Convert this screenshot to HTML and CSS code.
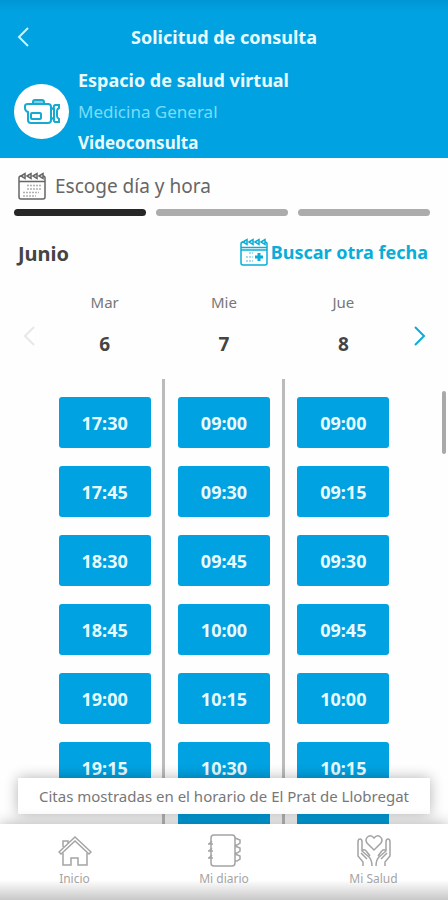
FILE: index.html
```html
<!DOCTYPE html>
<html lang="es">
<head>
  <meta charset="UTF-8">
  <meta name="viewport" content="width=device-width, initial-scale=1">
  <title>Solicitud de consulta</title>
  <link rel="stylesheet" href="styles.css">
</head>
<body>

<header class="header">
  <div class="topbar">
    <button class="back" aria-label="Volver">
      <svg width="12" height="20" viewBox="0 0 12 20"><path d="M11 1L2 10l9 9"/></svg>
    </button>
    <h1>Solicitud de consulta</h1>
  </div>
  <div class="service">
    <div class="avatar">
      <svg width="38" height="26" viewBox="0 0 38 26">
        <path class="handle" d="M10 5V3q0-2 2-2h7q2 0 2 2v2z"/>
        <path d="M5 5h20q3 0 3 3v13q0 3-3 3H8q-3 0-3-3v-8q-3-1-3-4V7q0-2 3-2z"/>
        <path d="M28 10q3 0 3-3l1-1h4v3q-2 1-2 3v5q0 2 2 3v3h-4l-1-1q0-3-3-3M31 9v12"/>
        <rect x="8" y="14" width="10" height="6" rx="1"/>
      </svg>
    </div>
    <div class="service-text">
      <div class="place">Espacio de salud virtual</div>
      <div class="specialty">Medicina General</div>
      <div class="kind">Videoconsulta</div>
    </div>
  </div>
</header>

<section class="steps">
  <h2>
    <svg class="calendar" width="28" height="28" viewBox="0 0 28 28">
      <path d="M5 4H3Q1 4 1 6v19q0 2 2 2h22q2 0 2-2V6q0-2-2-2M1 9.500h26"/>
      <path d="M3 4l4-2.500v5zM9 4l4-2.500v5zM15 4l4-2.500v5zM21 4l4-2.500v5z"/>
      <path class="dots" d="M9 13.500h15M9 17h15M5 20.500h16M5 24h13"/>
    </svg>
    Escoge día y hora
  </h2>
  <div class="progress">
    <span class="done"></span>
    <span></span>
    <span></span>
  </div>
</section>

<div class="month">
  <h3>Junio</h3>
  <button class="search-date">
    <svg class="calendar" width="28" height="28" viewBox="0 0 28 28">
      <path d="M5 4H3Q1 4 1 6v19q0 2 2 2h22q2 0 2-2V6q0-2-2-2M1 9.500h26M1 12h26"/>
      <path d="M3 4l4-2.500v5zM9 4l4-2.500v5zM15 4l4-2.500v5zM21 4l4-2.500v5z"/>
      <path class="dots" d="M9 15h4M6 19h7M6 23h7"/>
      <path class="plus" d="M19 15v8M15 19h8"/>
    </svg>
    Buscar otra fecha
  </button>
</div>

<div class="days">
  <button class="prev" aria-label="Días anteriores" disabled>
    <svg width="12" height="20" viewBox="0 0 12 20"><path d="M11 1L2 10l9 9"/></svg>
  </button>
  <div class="day"><span>Mar</span><strong>6</strong></div>
  <div class="day"><span>Mie</span><strong>7</strong></div>
  <div class="day"><span>Jue</span><strong>8</strong></div>
  <button class="next" aria-label="Días siguientes">
    <svg width="12" height="20" viewBox="0 0 12 20"><path d="M1 1l9 9-9 9"/></svg>
  </button>
</div>

<main class="schedule">
  <div class="slots">
    <div class="column">
      <button>17:30</button>
      <button>17:45</button>
      <button>18:30</button>
      <button>18:45</button>
      <button>19:00</button>
      <button>19:15</button>
    </div>
    <div class="column">
      <button>09:00</button>
      <button>09:30</button>
      <button>09:45</button>
      <button>10:00</button>
      <button>10:15</button>
      <button>10:30</button>
      <button></button>
    </div>
    <div class="column">
      <button>09:00</button>
      <button>09:15</button>
      <button>09:30</button>
      <button>09:45</button>
      <button>10:00</button>
      <button>10:15</button>
      <button></button>
    </div>
  </div>
  <div class="scroll-thumb"></div>
  <div class="notice">Citas mostradas en el horario de El Prat de Llobregat</div>
</main>

<nav class="tabs">
  <a href="#inicio">
    <svg width="34" height="34" viewBox="0 0 34 34">
      <path d="M1 18L17 3l16 15-2 2L17 7 3 20z"/>
      <path d="M5 19v12h8v-7h7v7h9V19M5 13V7h5v2"/>
    </svg>
    Inicio
  </a>
  <a href="#diario">
    <svg width="34" height="34" viewBox="0 0 34 34">
      <rect x="4" y="1" width="24" height="31" rx="3"/>
      <path d="M1 10h5M1 17h5M1 24h5M2 10l3-3M2 17l3-3M2 24l3-3"/>
      <path d="M28 4l5 2v3l-3 2h-2M28 12l5 2v3l-3 2h-2M28 20l5 2v3l-3 2h-2"/>
    </svg>
    Mi diario
  </a>
  <a href="#salud">
    <svg width="34" height="34" viewBox="0 0 34 34">
      <path d="M17 16l-7-7c-3-5 3-10 7-5 4-5 10 0 7 5z"/>
      <path d="M6 32v-4l-5-6V8q0-3 2-3t2 3v9l7 6q3 3 3 9M5 17q2-3 5 1l3 4M4 19l6 6"/>
      <path d="M28 32v-4l5-6V8q0-3-2-3t-2 3v9l-7 6q-3 3-3 9M29 17q-2-3-5 1l-3 4M30 19l-6 6"/>
    </svg>
    Mi Salud
  </a>
</nav>

</body>
</html>
```
FILE: styles.css
```css
* {
  box-sizing: border-box;
}
body {
  margin: 0;
  height: 100vh;
  display: flex;
  flex-direction: column;
  font-family: 'Noto Sans', 'Open Sans', sans-serif;
  background: #fefefe;
  color: #444;
}
h1, h2, h3 {
  margin: 0;
}
button {
  font-family: inherit;
  border: none;
  background: none;
  padding: 0;
  cursor: pointer;
}
svg {
  display: block;
  flex-shrink: 0;
  fill: none;
  stroke: currentColor;
  stroke-width: 2;
}
.header {
  background: linear-gradient(#0096d6, #00a2e1 12px);
  color: #e9fbff;
}
.topbar {
  display: grid;
  grid-template-columns: 32px 1fr 32px;
  align-items: center;
  height: 65px;
  padding: 9px 0 0;
}
.topbar h1 {
  font-size: 18px;
  text-align: center;
}
.back {
  color: #c4f4ff;
  padding-left: 17px;
}
.service {
  display: flex;
  align-items: center;
  gap: 9px;
  padding-left: 14px;
  line-height: 31px;
  font-size: 17px;
}
.avatar {
  display: flex;
  align-items: center;
  justify-content: center;
  width: 55px;
  height: 55px;
  border-radius: 50%;
  background: #fff;
  color: #18a9cf;
}
.avatar .handle {
  fill: #7fd0e4;
}
.place, .kind {
  font-weight: 700;
}
.place {
  font-size: 18px;
}
.specialty {
  color: #7adcf8;
}
.steps {
  padding: 14px 18px 0 14px;
}
.steps h2 {
  display: flex;
  align-items: center;
  gap: 9px;
  padding-left: 4px;
  height: 28px;
  font-size: 19px;
  font-weight: 400;
  color: #666;
}
.calendar {
  stroke-width: 1.5;
}
.calendar .dots {
  stroke-dasharray: 2 1;
  opacity: 0.5;
}
.calendar .plus {
  stroke-width: 3;
}
.progress {
  display: flex;
  gap: 10px;
  margin-top: 9px;
}
.progress span {
  flex: 1;
  height: 7px;
  border-radius: 4px;
  background: #acacac;
}
.progress .done {
  background: #272727;
}
.month {
  display: flex;
  align-items: flex-end;
  justify-content: space-between;
  padding: 22px 20px 0 18px;
}
.month h3 {
  line-height: 24px;
  font-size: 20px;
}
.search-date {
  display: flex;
  align-items: center;
  gap: 3px;
  font-size: 18px;
  font-weight: 700;
  color: #08add8;
}
.days {
  display: grid;
  grid-template-columns: 45px 1fr 1fr 1fr 45px;
  align-items: center;
  height: 113px;
}
.day {
  display: flex;
  flex-direction: column;
  align-items: center;
  gap: 18px;
  line-height: 24px;
  font-size: 15px;
  color: #777;
}
.day strong {
  font-size: 19px;
  color: #444;
}
.prev,
.next {
  padding-top: 26px;
}
.prev {
  color: #e8e8e8;
  padding-left: 23px;
}
.next {
  color: #08add8;
  padding-left: 11px;
}
.schedule {
  position: relative;
  flex: 1;
  min-height: 0;
  overflow: hidden;
}
.slots {
  display: grid;
  grid-template-columns: 1fr 1fr 1fr;
  height: 100%;
  padding: 0 45px;
}
.column {
  position: relative;
  display: flex;
  flex-direction: column;
  align-items: center;
  gap: 18px;
  padding-top: 18px;
}
.column + .column::before {
  content: '';
  position: absolute;
  left: -2px;
  top: 0;
  bottom: 0;
  width: 3px;
  background: #bbb;
}
.column button {
  flex-shrink: 0;
  width: 92px;
  height: 51px;
  border-radius: 3px;
  background: #00a2e1;
  color: #e9fbff;
  font-size: 18px;
  font-weight: 700;
}
.scroll-thumb {
  position: absolute;
  top: 12px;
  right: 2px;
  width: 4px;
  height: 63px;
  border-radius: 2px;
  background: #a9a9a9;
}
.notice {
  position: absolute;
  left: 18px;
  right: 18px;
  bottom: 10px;
  line-height: 36px;
  background: #fff;
  box-shadow: 0 0 14px rgba(0, 0, 0, 0.3);
  text-align: center;
  white-space: nowrap;
  font-size: 15px;
  color: #777;
}
.tabs {
  position: relative;
  display: flex;
  justify-content: space-between;
  height: 76px;
  padding: 10px 28px 0;
  background: linear-gradient(#fff 56px, #c8c8c8);
  box-shadow: 0 0 14px rgba(0, 0, 0, 0.3);
}
.tabs a {
  display: flex;
  flex-direction: column;
  align-items: center;
  gap: 2px;
  width: 93px;
  line-height: 18px;
  font-size: 12px;
  color: #a4a4a4;
  text-decoration: none;
}
.tabs svg {
  stroke-width: 1.5;
}
```
